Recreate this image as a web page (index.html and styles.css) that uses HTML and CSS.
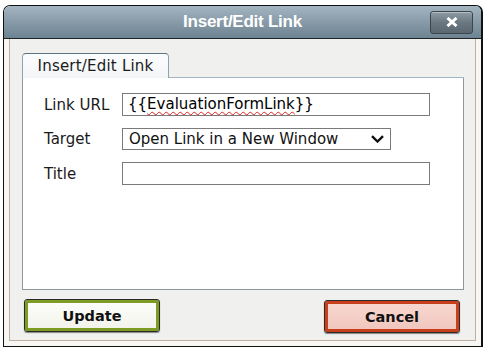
FILE: index.html
```html
<!DOCTYPE html>
<html lang="en">
<head>
  <meta charset="UTF-8">
  <title>Insert/Edit Link</title>
  <link rel="stylesheet" href="styles.css">
</head>
<body>
  <div class="dialog">
    <div class="titlebar">
      <span></span>
      <span class="title">Insert/Edit Link</span>
      <button class="close" type="button">
        <svg width="12" height="10" viewBox="0 0 12 10">
          <path d="M1.5 1 L10.5 9 M10.5 1 L1.5 9" stroke="#fff" stroke-width="3" fill="none"/>
        </svg>
      </button>
    </div>
    <div class="frame">
      <div class="tabs">
        <div class="tab">Insert/Edit Link</div>
        <div class="tab-fill"></div>
      </div>
      <div class="panel">
        <form class="form">
          <label>Link URL</label>
          <div class="field">{{<span class="misspelt">EvaluationFormLink</span>}}</div>
          <label>Target</label>
          <div class="select">
            <span>Open Link in a New Window</span>
            <svg width="13" height="8" viewBox="0 0 13 8">
              <path d="M1 1.2 L6.5 6.5 L12 1.2" stroke="#111" stroke-width="2.4" fill="none"/>
            </svg>
          </div>
          <label>Title</label>
          <input type="text" class="field">
        </form>
      </div>
      <div class="footer">
        <button type="button" class="btn btn-update">Update</button>
        <button type="button" class="btn btn-cancel">Cancel</button>
      </div>
    </div>
  </div>
</body>
</html>
```

FILE: styles.css
```css
body {
  margin: 0;
  background: #fff;
  font-family: "DejaVu Sans", Verdana, sans-serif;
}
.dialog {
  width: 477px;
  margin: 5px 0 0 3px;
  border: 1px solid #111;
  border-right-width: 2px;
  border-radius: 7px 7px 0 0;
  overflow: hidden;
  background: #f7f6f3;
}
.titlebar {
  height: 32px;
  border-bottom: 1px solid #1e2326;
  background: linear-gradient(#a4b5c1, #8598a6 55%, #6d8391);
  display: grid;
  grid-template-columns: 1fr auto 1fr;
  align-items: center;
  padding-right: 8px;
  padding-left: 8px;
}
.title {
  color: #fff;
  font-family: "Liberation Sans", Arial, sans-serif;
  font-weight: bold;
  font-size: 17px;
  letter-spacing: -0.25px;
}
.close {
  justify-self: end;
  width: 43px;
  height: 23px;
  padding: 0;
  border: 1px solid #3a454c;
  border-radius: 3px;
  background: linear-gradient(#8e9ca5, #6b7881 50%, #5b6770);
  box-shadow: inset 0 1px 0 rgba(255,255,255,0.35);
  display: flex;
  align-items: center;
  justify-content: center;
}
.frame {
  margin: 0 5px 5px;
  border: 1px solid #bdb0a1;
  border-top: none;
  background: #f0f0ee;
  padding: 14px 11px 0 12px;
}
.tabs {
  display: flex;
  height: 25px;
}
.tab {
  width: 145px;
  height: 24px;
  border: 1px solid #8fa2b2;
  border-top-color: #5d7284;
  border-bottom: none;
  border-radius: 4px 4px 0 0;
  background: linear-gradient(#fbfcfd, #f3f5f7);
  font-size: 15px;
  letter-spacing: 0.2px;
  color: #1a1a1a;
  text-align: center;
  line-height: 24px;
}
.tab-fill {
  flex: 1;
  border-bottom: 1px solid #a3b5c4;
}
.panel {
  box-sizing: border-box;
  height: 212px;
  background: #fff;
  border: 1px solid #8f999c;
  border-top: none;
  padding: 15px 0 0 21px;
}
.form {
  display: grid;
  grid-template-columns: 78px auto;
  grid-template-rows: 23px 22px 23px;
  row-gap: 12px;
  align-items: center;
  justify-items: start;
  margin: 0;
}
.form label {
  font-size: 15px;
  color: #1a1a1a;
}
.field {
  box-sizing: border-box;
  width: 308px;
  height: 23px;
  border: 1px solid #7a7a7a;
  padding: 0 5px;
  margin: 0;
  font-family: "DejaVu Sans", Verdana, sans-serif;
  font-size: 15px;
  line-height: 21px;
  color: #000;
  background: #fff;
}
.misspelt {
  text-decoration: underline wavy #e02020;
  text-decoration-thickness: 1px;
  text-underline-offset: 2px;
  text-decoration-skip-ink: none;
}
.select {
  box-sizing: border-box;
  width: 269px;
  height: 22px;
  border: 1px solid #7a7a7a;
  padding: 0 6px 0 6px;
  display: flex;
  align-items: center;
  justify-content: space-between;
  font-size: 15px;
  color: #111;
}
.footer {
  display: flex;
  justify-content: space-between;
  padding: 9px 4px 7px 2px;
}
.btn {
  width: 136px;
  height: 33px;
  border: 1px solid #2a2a2a;
  border-radius: 3px;
  font-family: "DejaVu Sans", Verdana, sans-serif;
  font-weight: bold;
  font-size: 14.5px;
  color: #111;
  padding: 0;
}
.btn-update {
  background: linear-gradient(#fdfefb, #f1f3ea);
  box-shadow: inset 0 0 0 3px #7e9b24, 0 1px 1px rgba(0,0,0,0.45);
}
.btn-cancel {
  margin-top: 1px;
  background: linear-gradient(#f8d9d2, #f0c5bc);
  box-shadow: inset 0 0 0 3px #c8401b, 0 1px 1px rgba(0,0,0,0.45);
}
```
